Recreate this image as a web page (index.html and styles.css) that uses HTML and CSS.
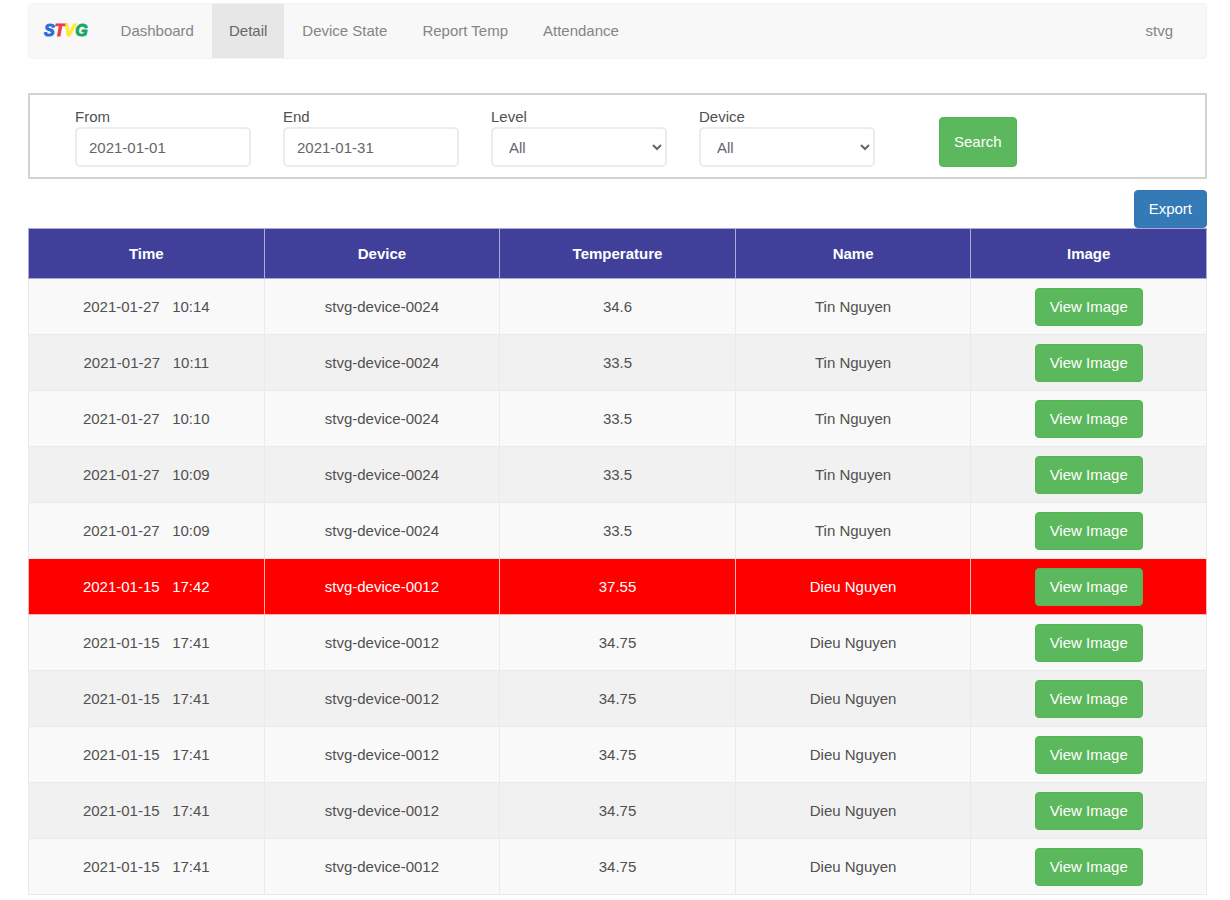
FILE: index.html
```html
<!DOCTYPE html>
<html lang="en">
<head>
<meta charset="utf-8">
<meta name="viewport" content="width=device-width, initial-scale=1">
<title>STVG - Detail</title>
<link rel="stylesheet" href="styles.css">
</head>
<body>
<div class="page">
  <nav class="navbar">
    <a class="brand" href="#"><span class="brand-s">S</span><span class="brand-t">T</span><span class="brand-v">V</span><span class="brand-g">G</span></a>
    <a class="nav-link" href="#">Dashboard</a>
    <a class="nav-link active" href="#">Detail</a>
    <a class="nav-link" href="#">Device State</a>
    <a class="nav-link" href="#">Report Temp</a>
    <a class="nav-link" href="#">Attendance</a>
    <a class="nav-link user" href="#">stvg</a>
  </nav>

  <form class="filters">
    <div class="field">
      <label for="from">From</label>
      <input class="control" id="from" type="text" value="2021-01-01">
    </div>
    <div class="field">
      <label for="end">End</label>
      <input class="control" id="end" type="text" value="2021-01-31">
    </div>
    <div class="field">
      <label for="level">Level</label>
      <select class="control" id="level"><option>All</option></select>
    </div>
    <div class="field">
      <label for="device">Device</label>
      <select class="control" id="device"><option>All</option></select>
    </div>
    <button class="btn btn-green search" type="button">Search</button>
  </form>

  <div class="actions">
    <button class="btn btn-blue" type="button">Export</button>
  </div>

  <table class="records">
    <thead>
      <tr><th>Time</th><th>Device</th><th>Temperature</th><th>Name</th><th>Image</th></tr>
    </thead>
    <tbody>
      <tr><td>2021-01-27&nbsp;&nbsp; 10:14</td><td>stvg-device-0024</td><td>34.6</td><td>Tin Nguyen</td><td><button class="btn btn-green" type="button">View Image</button></td></tr>
      <tr><td>2021-01-27&nbsp;&nbsp; 10:11</td><td>stvg-device-0024</td><td>33.5</td><td>Tin Nguyen</td><td><button class="btn btn-green" type="button">View Image</button></td></tr>
      <tr><td>2021-01-27&nbsp;&nbsp; 10:10</td><td>stvg-device-0024</td><td>33.5</td><td>Tin Nguyen</td><td><button class="btn btn-green" type="button">View Image</button></td></tr>
      <tr><td>2021-01-27&nbsp;&nbsp; 10:09</td><td>stvg-device-0024</td><td>33.5</td><td>Tin Nguyen</td><td><button class="btn btn-green" type="button">View Image</button></td></tr>
      <tr><td>2021-01-27&nbsp;&nbsp; 10:09</td><td>stvg-device-0024</td><td>33.5</td><td>Tin Nguyen</td><td><button class="btn btn-green" type="button">View Image</button></td></tr>
      <tr class="alert"><td>2021-01-15&nbsp;&nbsp; 17:42</td><td>stvg-device-0012</td><td>37.55</td><td>Dieu Nguyen</td><td><button class="btn btn-green" type="button">View Image</button></td></tr>
      <tr><td>2021-01-15&nbsp;&nbsp; 17:41</td><td>stvg-device-0012</td><td>34.75</td><td>Dieu Nguyen</td><td><button class="btn btn-green" type="button">View Image</button></td></tr>
      <tr><td>2021-01-15&nbsp;&nbsp; 17:41</td><td>stvg-device-0012</td><td>34.75</td><td>Dieu Nguyen</td><td><button class="btn btn-green" type="button">View Image</button></td></tr>
      <tr><td>2021-01-15&nbsp;&nbsp; 17:41</td><td>stvg-device-0012</td><td>34.75</td><td>Dieu Nguyen</td><td><button class="btn btn-green" type="button">View Image</button></td></tr>
      <tr><td>2021-01-15&nbsp;&nbsp; 17:41</td><td>stvg-device-0012</td><td>34.75</td><td>Dieu Nguyen</td><td><button class="btn btn-green" type="button">View Image</button></td></tr>
      <tr><td>2021-01-15&nbsp;&nbsp; 17:41</td><td>stvg-device-0012</td><td>34.75</td><td>Dieu Nguyen</td><td><button class="btn btn-green" type="button">View Image</button></td></tr>
    </tbody>
  </table>
</div>
</body>
</html>
```
FILE: styles.css
```css
* {
  box-sizing: border-box;
}

body {
  margin: 0;
  background: #fff;
  color: #505050;
  font: 15px/20px "Liberation Sans", Arial, sans-serif;
}

.page {
  padding: 3px 23px 0 28px;
}

.navbar {
  display: flex;
  gap: 1px;
  border: 1px solid #f3f3f3;
  border-radius: 4px;
  background: #f8f8f8;
}

.brand,
.nav-link {
  padding: 17px;
  color: #858585;
  text-decoration: none;
}

.brand {
  padding: 17px 15px;
  font-size: 16px;
  font-weight: 700;
  font-style: italic;
  -webkit-text-stroke: 1px currentColor;
}

.brand-s { color: #2f6ede; }
.brand-t { color: #ee3a4a; }
.brand-v { color: #ffe92e; }
.brand-g { color: #16a862; }

.nav-link.active {
  background: #e7e7e7;
  color: #666;
}

.user {
  margin-left: auto;
  padding-right: 33px;
}

.filters {
  display: flex;
  align-items: flex-end;
  gap: 32px;
  margin-top: 34px;
  padding: 10px 45px;
  border: 2px solid #d3d1d1;
}

.field {
  flex: 0 1 176px;
  min-width: 0;
}

.field label {
  display: block;
  margin-top: 2px;
}

.control {
  display: block;
  width: 100%;
  height: 40px;
  padding: 6px 12px;
  border: 2px solid #ececec;
  border-radius: 5px;
  background: #fff;
  color: #666;
  font: inherit;
}

.btn {
  padding: 8px 14px;
  border: 1px solid transparent;
  border-radius: 4px;
  color: #fff;
  font: inherit;
}

.btn-green {
  border-color: #55b555;
  background: #5cb85c;
}

.btn-blue {
  border-color: #2e75b4;
  background: #337ab7;
}

.search {
  margin-left: 32px;
  padding: 14px;
}

.actions {
  display: flex;
  justify-content: flex-end;
  margin-top: 11px;
}

.records {
  width: 100%;
  table-layout: fixed;
  border-collapse: collapse;
  text-align: center;
}

.records th,
.records td {
  height: 56px;
  padding: 8px;
  border: 1px solid #eaeaea;
  vertical-align: middle;
}

.records th {
  height: 50px;
  border-color: #aaaad4;
  background: #40409b;
  color: #fff;
  font-weight: 700;
}

.records tbody tr {
  background: #f9f9f9;
}

.records tbody tr:nth-child(even) {
  background: #f1f1f1;
}

.records tbody tr.alert {
  background: #f00;
  color: #fff;
}

.records .alert td {
  border-color: #ffb3b3;
}

.records .btn {
  display: block;
  margin: 0 auto;
}
```
